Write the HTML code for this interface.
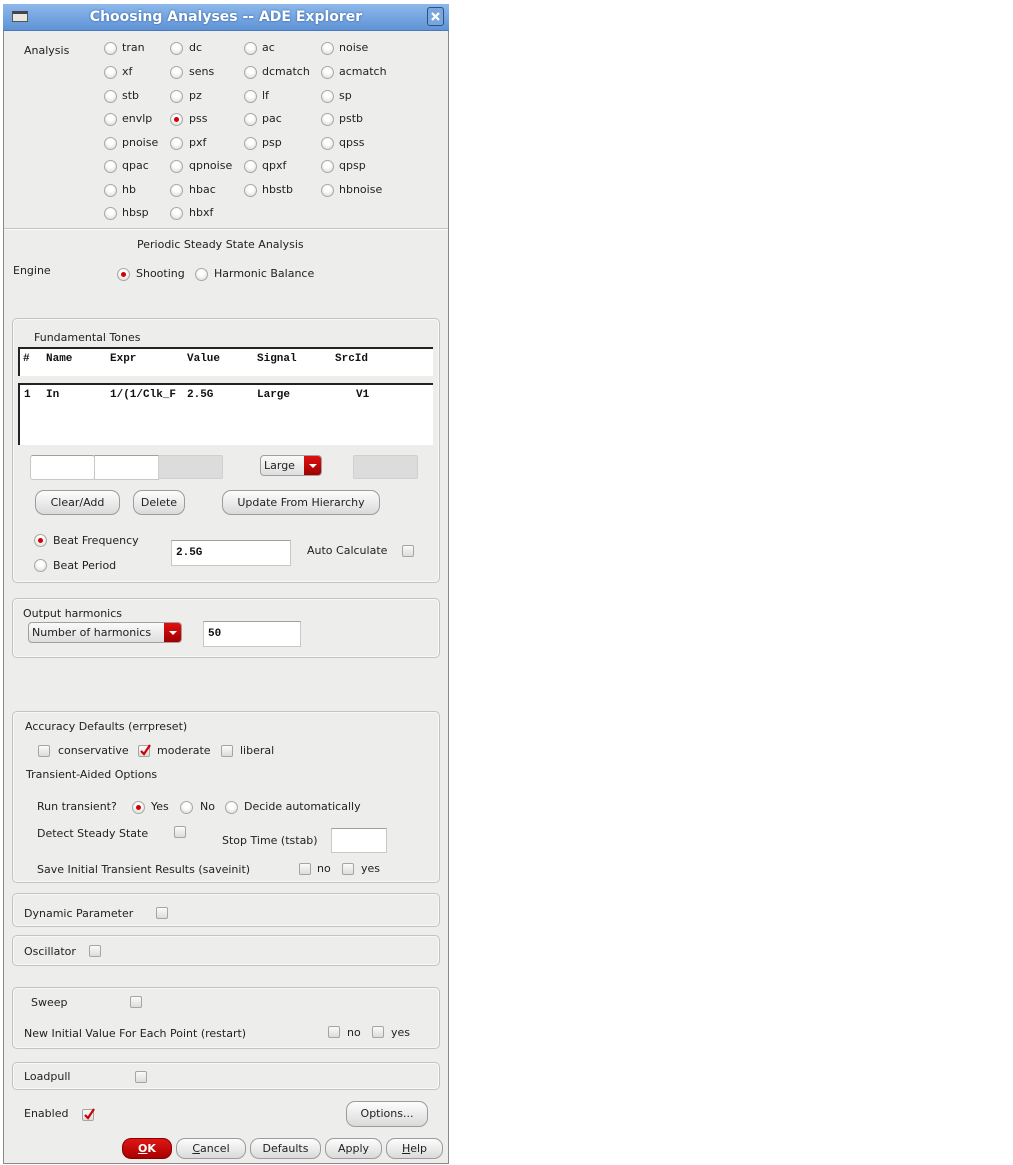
<!DOCTYPE html>
<html><head><meta charset="utf-8">
<style>
*{box-sizing:border-box;margin:0;padding:0}
body{width:1013px;height:1165px;background:#fff;position:relative;overflow:hidden;font-family:"DejaVu Sans","Liberation Sans",sans-serif}
.win{position:absolute;left:3px;top:4px;width:446px;height:1160px;background:#ededeb;border:1px solid #8a8a8a}
.title{position:absolute;left:3px;top:4px;width:446px;height:27px;background:linear-gradient(#8db8ea,#5f93d6);border-bottom:1px solid #4a78b8}
.title .tx{position:absolute;left:0;width:100%;top:5px;text-align:center;color:#fff;font:bold 14px "DejaVu Sans",sans-serif;text-shadow:0 0 2px #2a5a9a}
.t{position:absolute;font-size:11px;line-height:14px;color:#222;white-space:nowrap}
.m{position:absolute;font:bold 11px "Liberation Mono",monospace;line-height:14px;color:#111;white-space:nowrap}
.r{position:absolute;width:13px;height:13px;border-radius:50%;border:1px solid #a8a8a8;background:radial-gradient(circle at 50% 35%,#fff 30%,#d6d6d6 100%)}
.r.on::after{content:"";position:absolute;left:3px;top:3px;width:5px;height:5px;border-radius:50%;background:#d40000}
.c{position:absolute;width:12px;height:12px;border:1px solid #a5a5a5;border-radius:2px;background:linear-gradient(#fbfbfb,#dcdcdc)}
.g{position:absolute;border:1px solid #c3c3c3;border-radius:5px;box-shadow:inset 0 0 0 1px #f8f8f8}
.b{position:absolute;height:25px;border:1px solid #9c9c9c;border-radius:9px;background:linear-gradient(#fdfdfd,#dadada);font-size:11px;line-height:23px;text-align:center;color:#222}
.in{position:absolute;background:#fff;border:1px solid #c8c8c8;border-top-color:#a0a0a0}
.gy{position:absolute;background:#dcdcdc;border:1px solid #d0d0d0;border-radius:2px}
.dd{position:absolute;height:21px;border:1px solid #a0a0a0;border-radius:4px;background:linear-gradient(#fafafa,#dedede);font-size:11px;line-height:19px;padding-left:3px;color:#222;overflow:hidden}
.dd .a{position:absolute;right:0;top:0;width:17px;height:100%;background:linear-gradient(#e01010,#a00000)}
.dd .a::after{content:"";position:absolute;left:5px;top:8px;border-left:4px solid transparent;border-right:4px solid transparent;border-top:4px solid #fff}
</style></head><body>
<div class="win"></div>
<div class="title"><div style="position:absolute;left:9px;top:7px;width:16px;height:11px;background:#e8e8e0;border:1px solid #555;border-top:3px solid #445"></div><div class="tx">Choosing Analyses -- ADE Explorer</div>
<div style="position:absolute;left:424px;top:3px;width:17px;height:19px;border:1px solid #2c4f86;border-radius:3px;background:#7aa6de"><svg width="15" height="17" viewBox="0 0 15 17"><path d="M4 5L11 12M11 5L4 12" stroke="#fff" stroke-width="2.2"/></svg></div></div>

<!-- Analysis -->
<div class="t" style="left:24px;top:44px">Analysis</div>
<div class="r" style="left:104px;top:42px"></div><div class="t" style="left:122px;top:41px">tran</div>
<div class="r" style="left:170px;top:42px"></div><div class="t" style="left:189px;top:41px">dc</div>
<div class="r" style="left:244px;top:42px"></div><div class="t" style="left:262px;top:41px">ac</div>
<div class="r" style="left:321px;top:42px"></div><div class="t" style="left:339px;top:41px">noise</div>

<div class="r" style="left:104px;top:66px"></div><div class="t" style="left:122px;top:65px">xf</div>
<div class="r" style="left:170px;top:66px"></div><div class="t" style="left:189px;top:65px">sens</div>
<div class="r" style="left:244px;top:66px"></div><div class="t" style="left:262px;top:65px">dcmatch</div>
<div class="r" style="left:321px;top:66px"></div><div class="t" style="left:339px;top:65px">acmatch</div>

<div class="r" style="left:104px;top:90px"></div><div class="t" style="left:122px;top:89px">stb</div>
<div class="r" style="left:170px;top:90px"></div><div class="t" style="left:189px;top:89px">pz</div>
<div class="r" style="left:244px;top:90px"></div><div class="t" style="left:262px;top:89px">lf</div>
<div class="r" style="left:321px;top:90px"></div><div class="t" style="left:339px;top:89px">sp</div>

<div class="r" style="left:104px;top:113px"></div><div class="t" style="left:122px;top:112px">envlp</div>
<div class="r on" style="left:170px;top:113px"></div><div class="t" style="left:189px;top:112px">pss</div>
<div class="r" style="left:244px;top:113px"></div><div class="t" style="left:262px;top:112px">pac</div>
<div class="r" style="left:321px;top:113px"></div><div class="t" style="left:339px;top:112px">pstb</div>

<div class="r" style="left:104px;top:137px"></div><div class="t" style="left:122px;top:136px">pnoise</div>
<div class="r" style="left:170px;top:137px"></div><div class="t" style="left:189px;top:136px">pxf</div>
<div class="r" style="left:244px;top:137px"></div><div class="t" style="left:262px;top:136px">psp</div>
<div class="r" style="left:321px;top:137px"></div><div class="t" style="left:339px;top:136px">qpss</div>

<div class="r" style="left:104px;top:160px"></div><div class="t" style="left:122px;top:159px">qpac</div>
<div class="r" style="left:170px;top:160px"></div><div class="t" style="left:189px;top:159px">qpnoise</div>
<div class="r" style="left:244px;top:160px"></div><div class="t" style="left:262px;top:159px">qpxf</div>
<div class="r" style="left:321px;top:160px"></div><div class="t" style="left:339px;top:159px">qpsp</div>

<div class="r" style="left:104px;top:184px"></div><div class="t" style="left:122px;top:183px">hb</div>
<div class="r" style="left:170px;top:184px"></div><div class="t" style="left:189px;top:183px">hbac</div>
<div class="r" style="left:244px;top:184px"></div><div class="t" style="left:262px;top:183px">hbstb</div>
<div class="r" style="left:321px;top:184px"></div><div class="t" style="left:339px;top:183px">hbnoise</div>

<div class="r" style="left:104px;top:207px"></div><div class="t" style="left:122px;top:206px">hbsp</div>
<div class="r" style="left:170px;top:207px"></div><div class="t" style="left:189px;top:206px">hbxf</div>

<div style="position:absolute;left:4px;top:228px;width:444px;height:2px;border-top:1px solid #c4c4c4;border-bottom:1px solid #fafafa"></div>

<div class="t" style="left:137px;top:238px">Periodic Steady State Analysis</div>
<div class="t" style="left:13px;top:264px">Engine</div>
<div class="r on" style="left:117px;top:268px"></div><div class="t" style="left:136px;top:267px">Shooting</div>
<div class="r" style="left:195px;top:268px"></div><div class="t" style="left:214px;top:267px">Harmonic Balance</div>

<!-- Fundamental tones -->
<div class="g" style="left:12px;top:318px;width:428px;height:265px"></div>
<div class="t" style="left:34px;top:331px">Fundamental Tones</div>
<div style="position:absolute;left:18px;top:347px;width:415px;height:29px;background:#fff;border-top:2px solid #222;border-left:2px solid #222"></div>
<div class="m" style="left:23px;top:352px">#</div><div class="m" style="left:46px;top:352px">Name</div><div class="m" style="left:110px;top:352px">Expr</div><div class="m" style="left:187px;top:352px">Value</div><div class="m" style="left:257px;top:352px">Signal</div><div class="m" style="left:335px;top:352px">SrcId</div>
<div style="position:absolute;left:18px;top:383px;width:415px;height:62px;background:#fff;border-top:2px solid #222;border-left:2px solid #222"></div>
<div class="m" style="left:24px;top:388px">1</div><div class="m" style="left:46px;top:388px">In</div><div class="m" style="left:110px;top:388px">1/(1/Clk_F</div><div class="m" style="left:187px;top:388px">2.5G</div><div class="m" style="left:257px;top:388px">Large</div><div class="m" style="left:356px;top:388px">V1</div>

<div class="in" style="left:30px;top:455px;width:65px;height:25px;border-radius:3px"></div>
<div class="in" style="left:94px;top:455px;width:65px;height:25px"></div>
<div class="gy" style="left:158px;top:455px;width:65px;height:24px"></div>
<div class="dd" style="left:260px;top:455px;width:62px"><span>Large</span><div class="a"></div></div>
<div class="gy" style="left:353px;top:455px;width:65px;height:24px"></div>

<div class="b" style="left:35px;top:490px;width:85px">Clear/Add</div>
<div class="b" style="left:133px;top:490px;width:52px">Delete</div>
<div class="b" style="left:222px;top:490px;width:158px">Update From Hierarchy</div>

<div class="r on" style="left:34px;top:534px"></div><div class="t" style="left:53px;top:534px">Beat Frequency</div>
<div class="r" style="left:34px;top:559px"></div><div class="t" style="left:53px;top:559px">Beat Period</div>
<div class="in" style="left:171px;top:540px;width:120px;height:26px"></div><div class="m" style="left:176px;top:546px">2.5G</div>
<div class="t" style="left:307px;top:544px">Auto Calculate</div>
<div class="c" style="left:402px;top:545px"></div>

<!-- Output harmonics -->
<div class="g" style="left:12px;top:598px;width:428px;height:60px"></div>
<div class="t" style="left:23px;top:607px">Output harmonics</div>
<div class="dd" style="left:28px;top:622px;width:154px"><span>Number of harmonics</span><div class="a"></div></div>
<div class="in" style="left:203px;top:621px;width:98px;height:26px"></div><div class="m" style="left:208px;top:627px">50</div>

<!-- Accuracy -->
<div class="g" style="left:12px;top:711px;width:428px;height:172px"></div>
<div class="t" style="left:25px;top:720px">Accuracy Defaults (errpreset)</div>
<div class="c" style="left:38px;top:745px"></div><div class="t" style="left:58px;top:744px">conservative</div>
<div class="c" style="left:138px;top:745px"></div><svg style="position:absolute;left:138px;top:742px" width="14" height="15"><path d="M3 9L6 12L12 3" stroke="#d00000" stroke-width="2.2" fill="none"/></svg><div class="t" style="left:157px;top:744px">moderate</div>
<div class="c" style="left:221px;top:745px"></div><div class="t" style="left:240px;top:744px">liberal</div>
<div class="t" style="left:26px;top:768px">Transient-Aided Options</div>
<div class="t" style="left:37px;top:800px">Run transient?</div>
<div class="r on" style="left:132px;top:801px"></div><div class="t" style="left:151px;top:800px">Yes</div>
<div class="r" style="left:180px;top:801px"></div><div class="t" style="left:200px;top:800px">No</div>
<div class="r" style="left:225px;top:801px"></div><div class="t" style="left:244px;top:800px">Decide automatically</div>
<div class="t" style="left:37px;top:827px">Detect Steady State</div>
<div class="c" style="left:174px;top:826px"></div>
<div class="t" style="left:222px;top:834px">Stop Time (tstab)</div>
<div class="in" style="left:331px;top:828px;width:56px;height:25px"></div>
<div class="t" style="left:37px;top:863px">Save Initial Transient Results (saveinit)</div>
<div class="c" style="left:299px;top:863px"></div><div class="t" style="left:317px;top:862px">no</div>
<div class="c" style="left:342px;top:863px"></div><div class="t" style="left:361px;top:862px">yes</div>

<div class="g" style="left:12px;top:893px;width:428px;height:34px"></div>
<div class="t" style="left:24px;top:907px">Dynamic Parameter</div><div class="c" style="left:156px;top:907px"></div>
<div class="g" style="left:12px;top:935px;width:428px;height:31px"></div>
<div class="t" style="left:24px;top:945px">Oscillator</div><div class="c" style="left:89px;top:945px"></div>

<div class="g" style="left:12px;top:987px;width:428px;height:62px"></div>
<div class="t" style="left:31px;top:996px">Sweep</div><div class="c" style="left:130px;top:996px"></div>
<div class="t" style="left:24px;top:1027px">New Initial Value For Each Point (restart)</div>
<div class="c" style="left:328px;top:1026px"></div><div class="t" style="left:347px;top:1026px">no</div>
<div class="c" style="left:372px;top:1026px"></div><div class="t" style="left:391px;top:1026px">yes</div>

<div class="g" style="left:12px;top:1062px;width:428px;height:28px"></div>
<div class="t" style="left:24px;top:1070px">Loadpull</div><div class="c" style="left:135px;top:1071px"></div>

<div class="t" style="left:24px;top:1107px">Enabled</div>
<div class="c" style="left:82px;top:1109px"></div><svg style="position:absolute;left:82px;top:1106px" width="14" height="15"><path d="M3 9L6 12L12 3" stroke="#d00000" stroke-width="2.2" fill="none"/></svg>
<div class="b" style="left:346px;top:1101px;width:82px;height:26px;line-height:24px">Options...</div>

<div class="b" style="left:122px;top:1138px;width:50px;height:21px;line-height:19px;background:linear-gradient(#e01515,#a80000);border-color:#800;color:#fff;font-weight:bold"><u>O</u>K</div>
<div class="b" style="left:176px;top:1138px;width:70px;height:21px;line-height:19px"><u>C</u>ancel</div>
<div class="b" style="left:250px;top:1138px;width:71px;height:21px;line-height:19px">Defaults</div>
<div class="b" style="left:325px;top:1138px;width:57px;height:21px;line-height:19px">Apply</div>
<div class="b" style="left:386px;top:1138px;width:57px;height:21px;line-height:19px"><u>H</u>elp</div>
</body></html>
